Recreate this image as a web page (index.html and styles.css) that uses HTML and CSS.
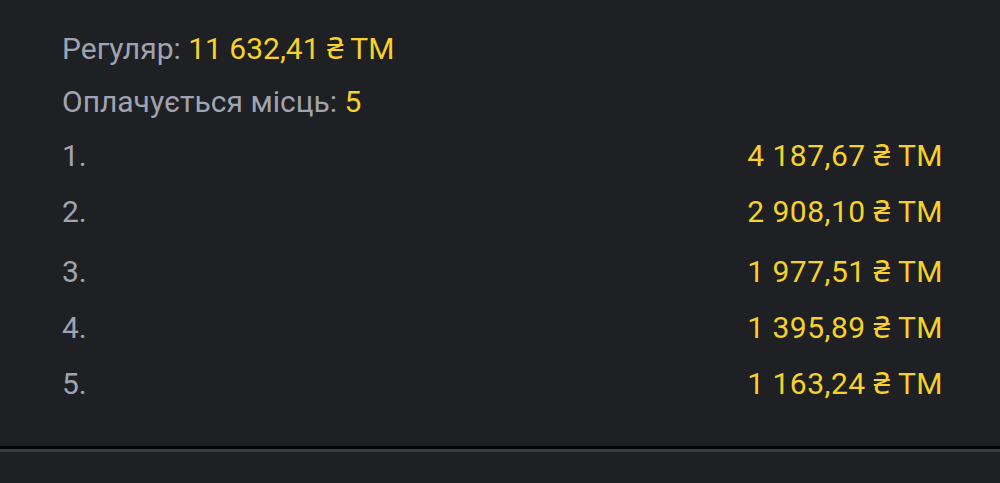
FILE: index.html
```html
<!DOCTYPE html>
<html lang="uk">
<head>
  <meta charset="UTF-8" />
  <meta name="viewport" content="width=device-width, initial-scale=1.0"/>
  <title>Призовий фонд</title>
  <link rel="stylesheet" href="styles.css">
</head>
<body>
  <div class="panel">
    <div class="line">Регуляр: <span class="gold">11 632,41 ₴ ТМ</span></div>
    <div class="line">Оплачується місць: <span class="gold">5</span></div>
    <div class="places">
      <div class="place"><span>1.</span><span class="gold sum">4 187,67 ₴ ТМ</span></div>
      <div class="place"><span>2.</span><span class="gold sum">2 908,10 ₴ ТМ</span></div>
      <div class="place"><span>3.</span><span class="gold sum">1 977,51 ₴ ТМ</span></div>
      <div class="place"><span>4.</span><span class="gold sum">1 395,89 ₴ ТМ</span></div>
      <div class="place"><span>5.</span><span class="gold sum">1 163,24 ₴ ТМ</span></div>
    </div>
  </div>
  <div class="divider"></div>
  <div class="footer"></div>
</body>
</html>
```

FILE: styles.css
```css
body {
  margin: 0;
  background: #1f2023;
  font-family: Roboto, "Noto Sans", sans-serif;
  font-size: 30px;
  color: #a0a4b2;
  height: 483px;
  overflow: hidden;
}
.panel {
  height: 446px;
  box-sizing: border-box;
  padding: 22px 57px 0 62px;
}
.line {
  line-height: 53px;
}
.gold {
  color: #f6d22a;
}
.sum {
  letter-spacing: 0.5px;
}
.place {
  display: flex;
  justify-content: space-between;
  line-height: 56px;
}
.place:nth-child(3) {
  margin-top: 4px;
}
.divider {
  height: 3px;
  background: #050506;
  border-bottom: 3px solid #3b3c3f;
}
.footer {
  height: 31px;
  background: #1e2022;
}
```
